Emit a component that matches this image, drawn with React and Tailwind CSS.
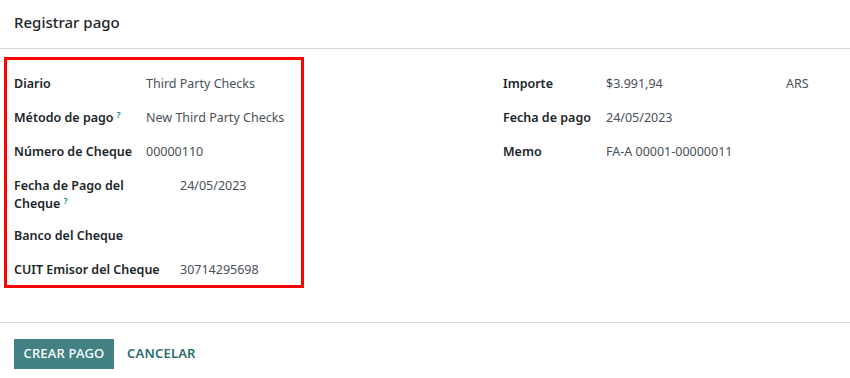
import React from "react";

const font = { fontFamily: '"Noto Sans", "Open Sans", sans-serif' };

function Field({ label, help, value, labelWidth = "w-[132px]", extra = "py-2" }) {
  return (
    <div className={`flex leading-[18px] ${extra}`}>
      <div className={`${labelWidth} shrink-0 pr-2 font-semibold text-[#212529]`}>
        {label}
        {help ? <sup className="ml-[3px] text-[9px] font-semibold text-[#017e84]">?</sup> : null}
      </div>
      <div className="text-[#495057]">{value}</div>
    </div>
  );
}

export default function App() {
  return (
    <div className="w-[850px] h-[378px] bg-white text-[12.5px]" style={font}>
      <div className="h-[49px] border-b border-[#d8dadd] px-[14px] flex items-center">
        <h4 className="text-[15px] font-medium text-[#212529] -mt-[4px]">Registrar pago</h4>
      </div>

      <div className="flex pt-[8px]">
        <div className="ml-[4px] w-[300px] h-[231px] border-[3px] border-[#ff0000] pl-[7px] pt-[7px]">
          <Field label="Diario" value="Third Party Checks" />
          <Field label="Método de pago" help value="New Third Party Checks" />
          <Field label="Número de Cheque" value="00000110" />
          <Field
            labelWidth="w-[166px]"
            extra="pt-2 pb-[6px]"
            label={
              <>
                Fecha de Pago del
                <br />
                Cheque
              </>
            }
            help
            value="24/05/2023"
          />
          <Field labelWidth="w-[166px]" label="Banco del Cheque" value="" />
          <Field labelWidth="w-[166px]" label="CUIT Emisor del Cheque" value="30714295698" />
        </div>

        <div className="ml-[199px] pt-[10px] flex-1">
          <div className="flex py-2 leading-[18px]">
            <div className="w-[103px] shrink-0 font-semibold text-[#212529]">Importe</div>
            <div className="w-[180px] text-[#495057]">$3.991,94</div>
            <div className="text-[#495057]">ARS</div>
          </div>
          <Field labelWidth="w-[103px]" label="Fecha de pago" value="24/05/2023" />
          <Field labelWidth="w-[103px]" label="Memo" value="FA-A 00001-00000011" />
        </div>
      </div>

      <div className="mt-[34px] border-t border-[#d8dadd] px-[14px] pt-[16px] flex items-center gap-[13px]">
        <button className="h-[30px] w-[100px] bg-[#428285] text-white text-[13px] font-medium tracking-[0.2px]">
          CREAR PAGO
        </button>
        <button className="h-[30px] text-[#2b6b6e] text-[13px] font-semibold tracking-[0.2px]">CANCELAR</button>
      </div>
    </div>
  );
}
